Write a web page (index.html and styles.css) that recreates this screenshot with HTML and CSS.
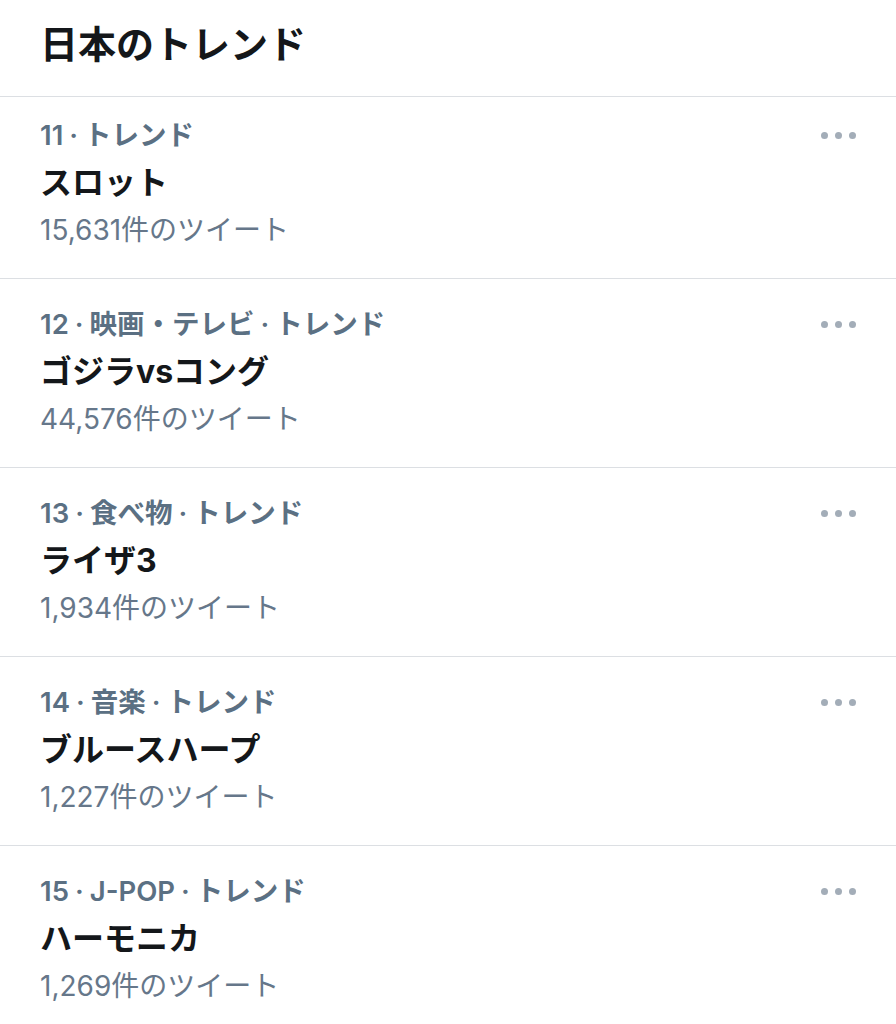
FILE: index.html
```html
<!DOCTYPE html>
<html lang="ja">
<head>
    <meta charset="UTF-8">
    <title>日本のトレンド</title>
    <link rel="stylesheet" href="styles.css">
</head>
<body>

    <div class="panel">
        <h2 class="panel-title">日本のトレンド</h2>

        <ul class="trends">
            <li class="trend trend-first">
                <div class="trend-body">
                    <div class="trend-meta">11<span class="sep">·</span>トレンド</div>
                    <div class="trend-name">スロット</div>
                    <div class="trend-count">15,631件のツイート</div>
                </div>
                <div class="more"><span></span><span></span><span></span></div>
            </li>
            <li class="trend">
                <div class="trend-body">
                    <div class="trend-meta">12<span class="sep">·</span>映画・テレビ<span class="sep">·</span>トレンド</div>
                    <div class="trend-name">ゴジラvsコング</div>
                    <div class="trend-count">44,576件のツイート</div>
                </div>
                <div class="more"><span></span><span></span><span></span></div>
            </li>
            <li class="trend">
                <div class="trend-body">
                    <div class="trend-meta">13<span class="sep">·</span>食べ物<span class="sep">·</span>トレンド</div>
                    <div class="trend-name">ライザ3</div>
                    <div class="trend-count">1,934件のツイート</div>
                </div>
                <div class="more"><span></span><span></span><span></span></div>
            </li>
            <li class="trend">
                <div class="trend-body">
                    <div class="trend-meta">14<span class="sep">·</span>音楽<span class="sep">·</span>トレンド</div>
                    <div class="trend-name">ブルースハープ</div>
                    <div class="trend-count">1,227件のツイート</div>
                </div>
                <div class="more"><span></span><span></span><span></span></div>
            </li>
            <li class="trend">
                <div class="trend-body">
                    <div class="trend-meta">15<span class="sep">·</span>J-POP<span class="sep">·</span>トレンド</div>
                    <div class="trend-name">ハーモニカ</div>
                    <div class="trend-count">1,269件のツイート</div>
                </div>
                <div class="more"><span></span><span></span><span></span></div>
            </li>
        </ul>
    </div>

</body>
</html>
```

FILE: styles.css
```css
body {
    font-family: 'Inter', 'Noto Sans CJK JP', sans-serif;
    background-color: #ffffff;
    color: #14171a;
    margin: 0;
    padding: 0;
}
.panel {
    width: 100%;
}
.panel-title {
    margin: 0;
    padding: 0 40px 8px;
    font-size: 38px;
    line-height: 88px;
    font-weight: 700;
    border-bottom: 1px solid #dcdfe3;
}
.trends {
    list-style: none;
    margin: 0;
    padding: 0;
}
.trend {
    display: flex;
    justify-content: space-between;
    padding: 21px 40px 25px;
    border-bottom: 1px solid #dcdfe3;
}
.trend-first {
    padding-top: 14px;
}
.trend-meta {
    font-size: 27.5px;
    line-height: 48px;
    font-weight: 600;
    color: #5b7083;
}
.sep {
    margin: 0 6px;
}
.trend-name {
    font-size: 32px;
    line-height: 48px;
    font-weight: 700;
}
.trend-count {
    font-size: 28px;
    line-height: 46px;
    color: #66778a;
}
.more {
    display: flex;
    gap: 7px;
    height: 48px;
    align-items: center;
}
.more span {
    width: 7px;
    height: 7px;
    border-radius: 50%;
    background-color: #a3adb8;
}
```
